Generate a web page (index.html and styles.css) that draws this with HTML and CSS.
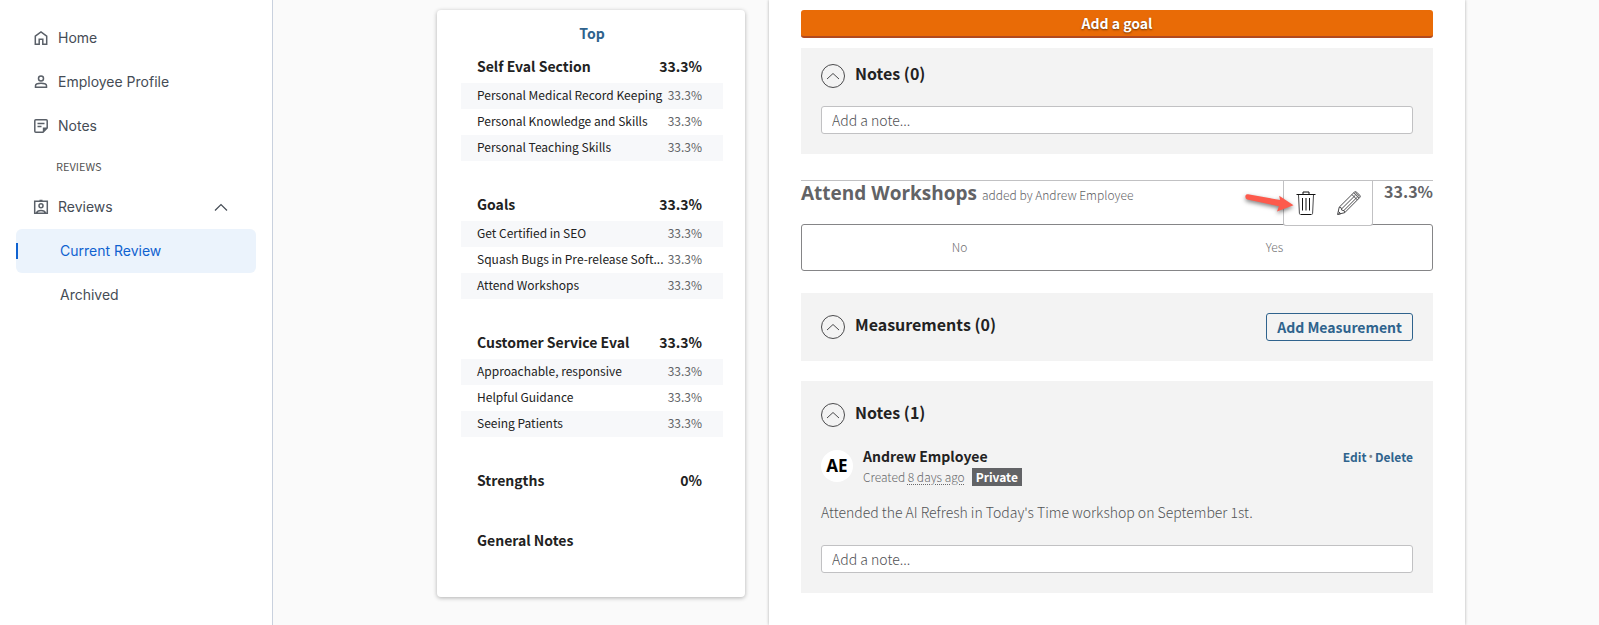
FILE: index.html
```html
<!DOCTYPE html>
<html lang="en">
<head>
<meta charset="utf-8">
<title>Current Review</title>
<link rel="stylesheet" href="styles.css">
</head>
<body>
<div class="app">
  <nav class="sidebar" aria-label="Main">
    <a class="nav-item" href="#">
      <svg class="nav-icon" viewBox="0 0 16 16"><path d="M2.300 6.200 8 1.900l5.700 4.300v8H9.800V9.300H6.200v4.900H2.300z"/></svg>
      Home
    </a>
    <a class="nav-item" href="#">
      <svg class="nav-icon" viewBox="0 0 16 16"><circle cx="8" cy="4.500" r="2.500"/><path d="M2.500 13.300v-1.600C2.500 10.200 5.500 9.300 8 9.300s5.500.9 5.500 2.400v1.600z"/></svg>
      Employee Profile
    </a>
    <a class="nav-item" href="#">
      <svg class="nav-icon" viewBox="0 0 16 16"><path d="M2.800 1.800h10.400q1 0 1 1v7.200l-4.200 4.200H2.800q-1 0-1-1V2.800q0-1 1-1zM4.500 5.500h7M4.500 8.500h4"/><path class="solid" d="M14.200 9.500H9.800v4.700z"/></svg>
      Notes
    </a>
    <h2 class="nav-heading">REVIEWS</h2>
    <a class="nav-item" href="#" aria-expanded="true">
      <svg class="nav-icon" viewBox="0 0 16 16"><path d="M1.700 2.300h12.600v12H1.700zM3.500 14c.5-1.700 2.500-2.400 4.500-2.400s4 .7 4.500 2.400M6.500 1.600h3"/><circle cx="8" cy="6.700" r="2"/></svg>
      Reviews
      <svg class="nav-chevron" viewBox="0 0 14 8"><path d="M1 7.500 7 1.500l6 6"/></svg>
    </a>
    <a class="nav-item nav-sub is-active" href="#" aria-current="page">Current Review</a>
    <a class="nav-item nav-sub" href="#">Archived</a>
  </nav>

  <main class="main">
    <aside class="outline">
      <a class="outline-top" href="#">Top</a>
      <section class="outline-section">
        <h3 class="outline-head"><span>Self Eval Section</span><span>33.3%</span></h3>
        <ul class="outline-list">
          <li><span class="outline-name">Personal Medical Record Keeping</span><span class="outline-pct">33.3%</span></li>
          <li><span class="outline-name">Personal Knowledge and Skills</span><span class="outline-pct">33.3%</span></li>
          <li><span class="outline-name">Personal Teaching Skills</span><span class="outline-pct">33.3%</span></li>
        </ul>
      </section>
      <section class="outline-section">
        <h3 class="outline-head"><span>Goals</span><span>33.3%</span></h3>
        <ul class="outline-list">
          <li><span class="outline-name">Get Certified in SEO</span><span class="outline-pct">33.3%</span></li>
          <li><span class="outline-name">Squash Bugs in Pre-release Soft...</span><span class="outline-pct">33.3%</span></li>
          <li><span class="outline-name">Attend Workshops</span><span class="outline-pct">33.3%</span></li>
        </ul>
      </section>
      <section class="outline-section">
        <h3 class="outline-head"><span>Customer Service Eval</span><span>33.3%</span></h3>
        <ul class="outline-list">
          <li><span class="outline-name">Approachable, responsive</span><span class="outline-pct">33.3%</span></li>
          <li><span class="outline-name">Helpful Guidance</span><span class="outline-pct">33.3%</span></li>
          <li><span class="outline-name">Seeing Patients</span><span class="outline-pct">33.3%</span></li>
        </ul>
      </section>
      <section class="outline-section">
        <h3 class="outline-head"><span>Strengths</span><span>0%</span></h3>
      </section>
      <section class="outline-section">
        <h3 class="outline-head"><span>General Notes</span></h3>
      </section>
    </aside>

    <div class="panel">
      <button class="add-goal" type="button">Add a goal</button>

      <section class="box box-tight">
        <div class="box-head">
          <button class="toggle" type="button" aria-label="Collapse notes"><svg viewBox="0 0 24 24"><circle cx="12" cy="12" r="11.500"/><path d="m6 15 6-5.500 6 5.500"/></svg></button>
          <h3 class="box-title">Notes (0)</h3>
        </div>
        <input class="note-input" type="text" placeholder="Add a note..." aria-label="Add a note">
      </section>

      <section class="goal">
        <header class="goal-head">
          <h2 class="goal-title">Attend Workshops</h2>
          <span class="goal-by">added by Andrew Employee</span>
          <div class="goal-tools">
            <button class="tool" type="button" aria-label="Delete goal">
              <svg viewBox="0 0 24 24"><path class="dark" d="M2.500 3.500h19M9 3V1h6v2"/><path d="m4.500 4 .9 18.300q0 1.200 1.200 1.200h10.800q1.200 0 1.200-1.200L19.500 4"/><path class="dark" d="M8.500 7v12.500M12 7v12.500M15.500 7v12.500M7 23.500h10"/></svg>
            </button>
            <button class="tool" type="button" aria-label="Edit goal">
              <svg viewBox="0 0 24 24"><path d="m.6 23.400 1.600-7.200L17.300 1.200q1.200-1.100 2.400 0l3 3q1.200 1.200 0 2.400L7.700 21.700zM2.200 16.200l2 .6.500 2.300 2.500.6.500 2M5 17.500 18.300 4.300M7 19.400 20.200 6.200M15 3.600l5.300 5.300M16.700 1.900l5.300 5.300M18.200 1.500l4.300 4.300M.6 23.400l3.200-.7-2.500-2.300"/></svg>
            </button>
            <svg class="pointer" viewBox="0 0 52 28"><path d="M2.500 3.600Q3.200 2 5 2.200L37 8l-.8-4.300L50.500 13.300 34 19.500l2-5.300L4.200 7.600Q1.800 6.500 2.500 3.600z"/></svg>
          </div>
          <strong class="goal-pct">33.3%</strong>
        </header>
        <div class="rating">
          <button class="rating-option" type="button">No</button>
          <button class="rating-option" type="button">Yes</button>
        </div>
      </section>

      <section class="box">
        <div class="box-head">
          <button class="toggle" type="button" aria-label="Collapse measurements"><svg viewBox="0 0 24 24"><circle cx="12" cy="12" r="11.500"/><path d="m6 15 6-5.500 6 5.500"/></svg></button>
          <h3 class="box-title">Measurements (0)</h3>
          <button class="add-measurement" type="button">Add Measurement</button>
        </div>
      </section>

      <section class="box">
        <div class="box-head">
          <button class="toggle" type="button" aria-label="Collapse notes"><svg viewBox="0 0 24 24"><circle cx="12" cy="12" r="11.500"/><path d="m6 15 6-5.500 6 5.500"/></svg></button>
          <h3 class="box-title">Notes (1)</h3>
        </div>
        <article class="note">
          <header class="note-head">
            <span class="avatar">AE</span>
            <div class="note-meta">
              <strong class="note-author">Andrew Employee</strong>
              <div class="note-date"><span>Created <abbr>8 days ago</abbr></span><span class="badge">Private</span></div>
            </div>
            <div class="note-actions"><a href="#">Edit</a><span class="dot">•</span><a href="#">Delete</a></div>
          </header>
          <p class="note-text">Attended the AI Refresh in Today's Time workshop on September 1st.</p>
        </article>
        <input class="note-input" type="text" placeholder="Add a note..." aria-label="Add a note">
      </section>
    </div>
  </main>
</div>
</body>
</html>
```
FILE: styles.css
```css
* { box-sizing: border-box; }

body {
  margin: 0;
  background: #fafafa;
  color: #222;
  font-family: "Noto Sans CJK SC", "Noto Sans", sans-serif;
  font-size: 14px;
  line-height: 20px;
}

h2, h3, p, ul { margin: 0; padding: 0; }
ul { list-style: none; }
a { text-decoration: none; color: #2f638d; }
button, input { font: inherit; margin: 0; }
svg { fill: none; stroke: currentColor; display: block; }

.app { display: flex; min-height: 100vh; }

/* Sidebar */
.sidebar {
  flex: 0 0 273px;
  padding: 16px;
  background: #fff;
  border-right: 1px solid #c9d1de;
}
.nav-item {
  display: flex;
  align-items: center;
  gap: 9px;
  height: 44px;
  padding: 0 28px 0 17px;
  border-radius: 6px;
  color: #454c55;
  font-family: Inter, sans-serif;
  font-size: 14px;
}
.nav-icon { width: 16px; height: 16px; stroke-width: 1.500; color: #5a6068; }
.nav-icon .solid { fill: currentColor; stroke: none; }
.nav-chevron { width: 14px; height: 8px; margin-left: auto; stroke-width: 1.200; }
.nav-heading {
  padding: 8px 0 9px 40px;
  color: #555;
  font-size: 11px;
  font-weight: 400;
}
.nav-sub { padding-left: 44px; }
.nav-sub.is-active {
  color: #0f62d0;
  background: linear-gradient(#0f62d0, #0f62d0) left center / 2px 16px no-repeat #ebf3fc;
}

/* Main area */
.main {
  flex: 1;
  display: flex;
  justify-content: center;
  align-items: flex-start;
  gap: 24px;
  padding-left: 30px;
}

/* Outline card */
.outline {
  flex: 0 0 308px;
  min-width: 0;
  margin-top: 10px;
  padding: 8px 22px 40px 24px;
  background: #fff;
  border-radius: 4px;
  box-shadow: 0 1px 4px rgba(0, 0, 0, .3);
}
.outline-top { display: block; padding-bottom: 2px; line-height: 31px; text-align: center; font-weight: 700; }
.outline-section + .outline-section { margin-top: 28px; }
.outline-head {
  display: flex;
  justify-content: space-between;
  padding: 0 21px 2px 16px;
  font-size: 14px;
  line-height: 30px;
}
.outline-list li {
  display: flex;
  justify-content: space-between;
  gap: 2px;
  padding: 0 21px 2px 16px;
  font-size: 12px;
  line-height: 24px;
}
.outline-list li:nth-child(odd) { background: #f7f8fa; }
.outline-name { white-space: nowrap; }
.outline-pct { color: #626366; }

/* Review panel */
.panel {
  flex: 0 1 696px;
  align-self: stretch;
  padding: 10px 32px 32px;
  background: #fff;
  box-shadow: 0 0 3px rgba(0, 0, 0, .3);
}
.add-goal {
  display: block;
  width: 100%;
  height: 28px;
  padding: 0;
  border: 0;
  border-bottom: 2px solid #b24a1f;
  border-radius: 3px;
  background: #e96b06;
  color: #fff;
  font-weight: 700;
  line-height: 26px;
  text-shadow: 0 1px 2px rgba(0, 0, 0, .5);
}
.box { margin-top: 20px; padding: 20px; background: #f3f3f3; }
.box-tight { margin-top: 10px; padding-top: 14px; }
.box-head { display: flex; align-items: center; gap: 10px; min-height: 28px; }
.box-title { padding-bottom: 6px; font-size: 16px; }
.toggle { width: 24px; height: 24px; padding: 0; border: 0; background: none; color: #4a4a4c; }
.toggle svg { width: 24px; height: 24px; }
.add-measurement {
  height: 28px;
  margin-left: auto;
  padding: 0 10px;
  border: 1px solid #2f638d;
  border-radius: 3px;
  background: none;
  color: #2f638d;
  font-weight: 700;
}
.note-input {
  display: block;
  width: 100%;
  height: 28px;
  margin-top: 16px;
  padding: 0 10px;
  border: 1px solid #c1c1c3;
  border-radius: 3px;
  background: #fff;
  font-weight: 300;
}
.note-input::placeholder { color: #505154; opacity: 1; }

/* Goal */
.goal { margin: 26px 0 22px; }
.goal-head { display: flex; height: 44px; border-top: 1px solid #c1c1c3; color: #626366; }
.goal-title { font-family: "Open Sans", sans-serif; font-size: 19px; font-weight: 700; line-height: 24px; }
.goal-by { margin-left: 5px; font-size: 12px; font-weight: 300; line-height: 28px; }
.goal-tools {
  position: relative;
  display: flex;
  gap: 19px;
  height: 45px;
  margin-left: auto;
  padding: 10px 11px 0 10px;
  border: solid #c1c1c3;
  border-width: 0 1px 1px;
  border-radius: 0 0 3px 3px;
  background: #fff;
}
.tool { width: 24px; height: 24px; padding: 0; border: 0; background: none; color: #4a4a4c; }
.tool svg { width: 24px; height: 24px; }
.tool .dark { stroke: #111; }
/* Arrow laid over the toolbar's left edge */
.pointer {
  position: absolute;
  top: 11px;
  left: -41px;
  width: 52px;
  height: 28px;
  fill: #fd5a4c;
  stroke: none;
  filter: drop-shadow(0 2px 2px rgba(0, 0, 0, .5));
}
.goal-pct { min-width: 60px; font-size: 16px; text-align: right; }
.rating { display: flex; height: 47px; border: 1px solid #858587; border-radius: 3px; }
.rating-option { flex: 1; padding-bottom: 3px; border: 0; background: none; color: #707072; font-size: 12px; font-weight: 300; }

/* Note */
.note { padding: 19px 0 7px; }
.note-head { display: flex; align-items: flex-start; gap: 10px; }
.avatar {
  width: 32px;
  height: 32px;
  margin-top: 2px;
  border-radius: 50%;
  background: #fff;
  color: #000;
  font-family: "Noto Sans", sans-serif;
  font-size: 17px;
  font-weight: 700;
  line-height: 32px;
  text-align: center;
}
.note-author { display: block; line-height: 16px; }
.note-date { display: flex; gap: 7px; margin-top: 4px; color: #68696b; font-size: 12px; font-weight: 300; line-height: 18px; }
.note-date abbr { text-decoration: underline dotted 1px; text-underline-offset: 2px; }
.badge { padding: 0 4px; background: #626366; color: #fff; font-weight: 700; }
.note-actions { display: flex; gap: 2px; margin-left: auto; color: #858587; font-size: 12px; line-height: 18px; }
.note-actions a { font-weight: 700; }
.dot { font-family: "Noto Sans", sans-serif; }
.note-text { margin-top: 16px; color: #525356; font-weight: 300; }
```
